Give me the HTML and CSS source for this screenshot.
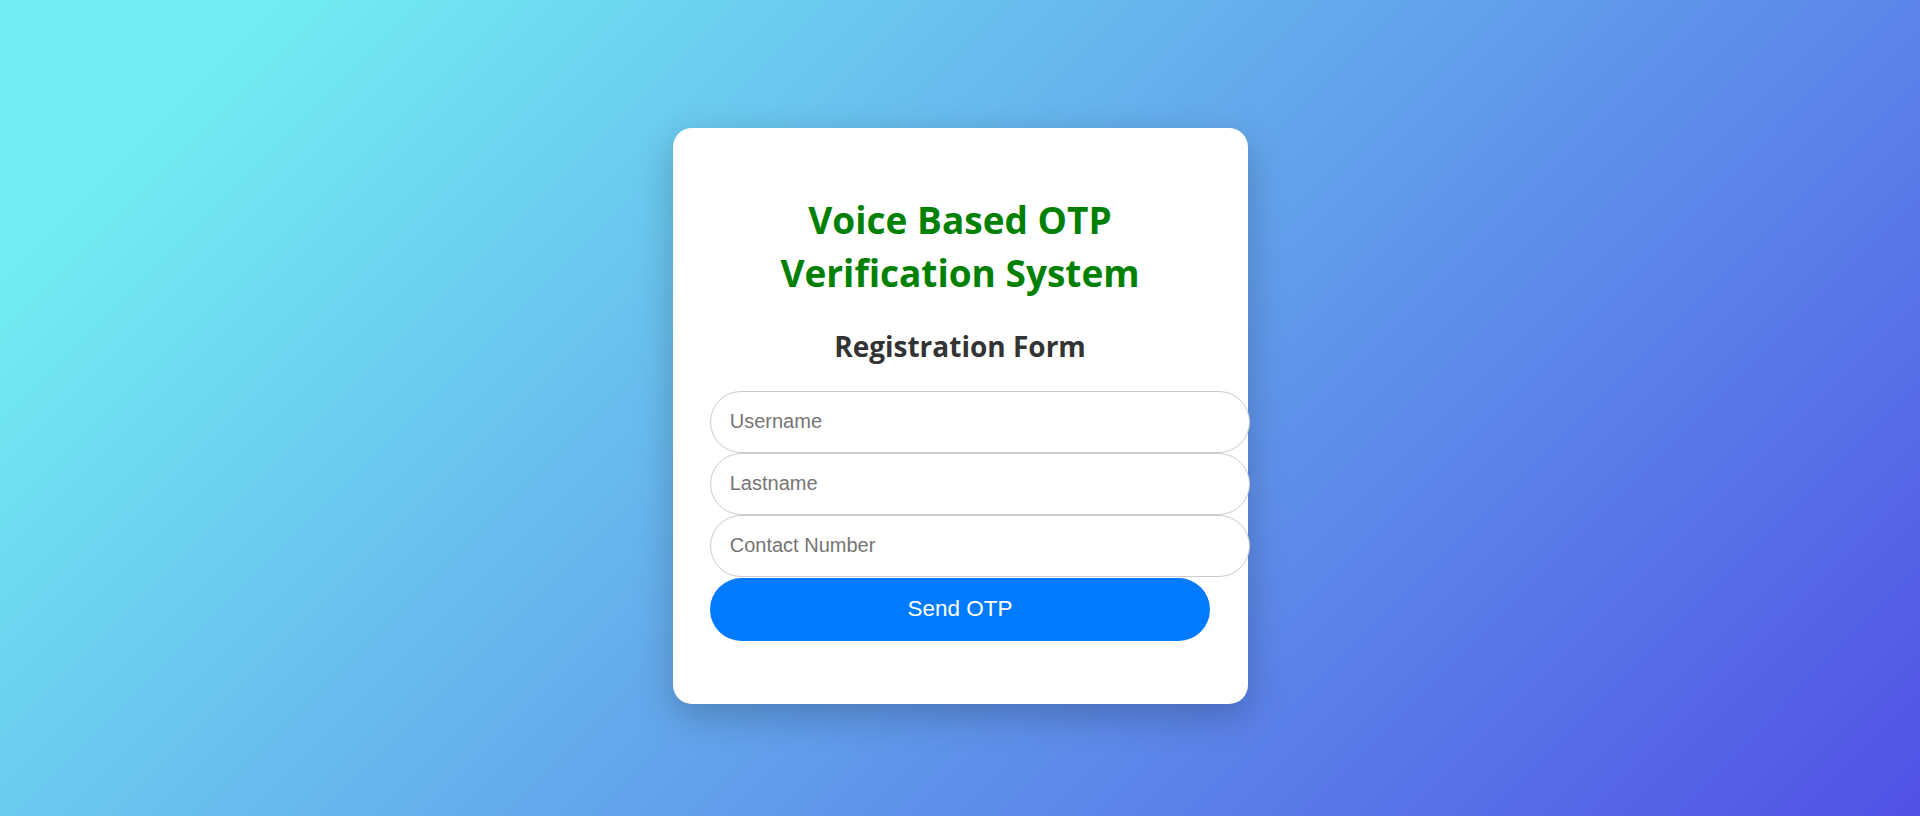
FILE: index.html
```html
<!DOCTYPE html>
<html lang="en">
<head>
<meta charset="utf-8">
<title>Voice Based OTP Verification System</title>
<link rel="stylesheet" href="styles.css">
</head>
<body>
  <div class="card">
    <h1 class="title">Voice Based OTP Verification System</h1>
    <h2 class="subtitle">Registration Form</h2>
    <form class="form">
      <input class="field" type="text" placeholder="Username">
      <input class="field" type="text" placeholder="Lastname">
      <input class="field" type="text" placeholder="Contact Number">
      <button class="btn" type="button">Send OTP</button>
    </form>
  </div>
</body>
</html>
```

FILE: styles.css
```css
html {
  background: linear-gradient(135deg, #72EDF2 10%, #5151E5 100%);
  min-height: 100%;
}
body {
  margin: 0;
  min-height: 100vh;
  box-sizing: border-box;
  padding-top: 16px;
  display: flex;
  justify-content: center;
  align-items: center;
  font-family: "Open Sans", "Noto Sans", sans-serif;
}
.card {
  width: 500px;
  padding: 37.5px;
  background: #fff;
  border-radius: 19px;
  box-shadow: 0 12px 37px rgba(0, 0, 0, 0.22);
  text-align: center;
}
.title {
  margin: 27.5px 0 26.8px;
  font-size: 37px;
  line-height: 53px;
  font-weight: 700;
  color: #008000;
}
.subtitle {
  margin: 24.9px 0;
  font-size: 28px;
  line-height: 40px;
  font-weight: 700;
  color: #333;
}
.form {
  margin: 0 0 25px;
  display: flex;
  flex-direction: column;
  align-items: flex-start;
}
.field {
  width: 500px;
  height: 60px;
  padding: 0 18.75px;
  border: 1.25px solid #ccc;
  border-radius: 31px;
  font-family: "Liberation Sans", Arial, sans-serif;
  font-size: 20px;
  color: #333;
  background: #fff;
  outline: none;
  flex: none;
  box-sizing: content-box;
}
.field::placeholder {
  color: #757575;
}
.btn {
  width: 500px;
  height: 63.7px;
  margin-top: 0.6px;
  border: none;
  border-radius: 32px;
  background: #007bff;
  color: #fff;
  font-family: "Liberation Sans", Arial, sans-serif;
  font-size: 22.5px;
}
```
